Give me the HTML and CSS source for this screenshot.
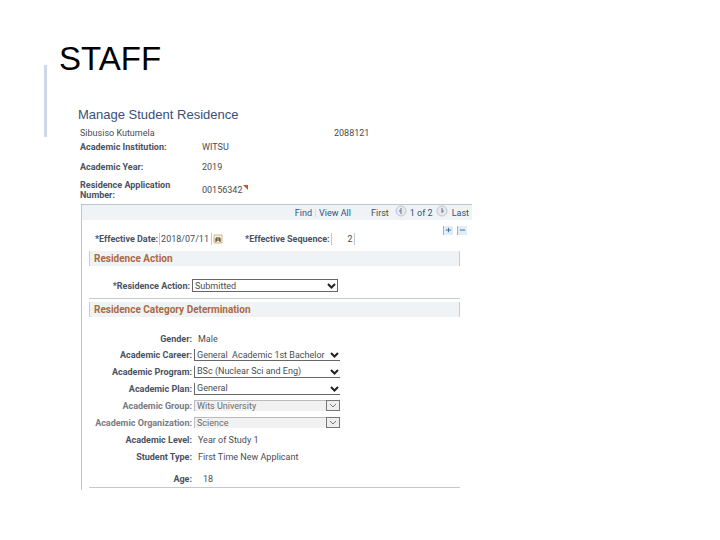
FILE: index.html
```html
<!DOCTYPE html>
<html lang="en">
<head>
<meta charset="utf-8">
<title>Manage Student Residence</title>
<link rel="stylesheet" href="styles.css">
</head>
<body>
<main class="slide">
  <div class="accent"></div>
  <div class="content">
    <h1>STAFF</h1>
    <form class="page">
      <h2>Manage Student Residence</h2>
      <div class="summary">
        <span>Sibusiso Kutumela</span><span></span><span>2088121</span>
        <b>Academic Institution:</b><span>WITSU</span><span></span>
        <b>Academic Year:</b><span>2019</span><span></span>
        <b>Residence Application Number:</b>
        <span class="flagged">00156342<svg class="flag" viewBox="0 0 5 5"><path d="M0 0H5V5L3 3Z"/></svg></span>
      </div>
      <section class="scroll">
        <nav class="pager">
          <a href="#">Find</a><i class="divider"></i><a href="#" class="all">View All</a>
          <span class="first">First</span>
          <button type="button" class="round" aria-label="Previous"><svg viewBox="0 0 12 12"><circle cx="6" cy="6" r="5"/><path d="M6 3V9M6 6H4"/></svg></button>
          <span class="count">1 of 2</span>
          <button type="button" class="round" aria-label="Next"><svg viewBox="0 0 12 12"><circle cx="6" cy="6" r="5"/><path d="M6 3V8M6 6H8"/></svg></button>
          <a href="#">Last</a>
        </nav>
        <div class="effective">
          <label for="date">*Effective Date:</label>
          <input id="date" class="date" value="2018/07/11">
          <button type="button" class="calendar" aria-label="Choose date"><svg viewBox="0 0 10 10"><path class="sheet" d="M1 1H9V9H1Z"/><path class="mark" d="M3 8V4H7V8M3 6H7"/></svg></button>
          <label for="seq" class="seq-label">*Effective Sequence:</label>
          <input id="seq" class="seq" value="2">
          <div class="tools">
            <button type="button" aria-label="Add row"><svg viewBox="0 0 10 9"><path d="M2 4.500H8M5 2V7"/></svg></button>
            <button type="button" aria-label="Delete row"><svg viewBox="0 0 10 9"><path d="M2 4.500H8"/></svg></button>
          </div>
        </div>
        <section class="group">
          <h3>Residence Action</h3>
          <div class="action">
            <label for="action">*Residence Action:</label>
            <span class="pick boxed"><select id="action"><option>Submitted</option></select><svg viewBox="0 0 9 6"><path d="M1 1L4.500 4.500L8 1"/></svg></span>
          </div>
        </section>
        <section class="group">
          <h3>Residence Category Determination</h3>
          <div class="fields">
            <b>Gender:</b><span class="value">Male</span>
            <label for="career">Academic Career:</label>
            <span class="pick"><select id="career"><option>General&nbsp; Academic 1st Bachelor</option></select><svg viewBox="0 0 9 6"><path d="M1 1L4.500 4.500L8 1"/></svg></span>
            <label for="program">Academic Program:</label>
            <span class="pick"><select id="program"><option>BSc (Nuclear Sci and Eng)</option></select><svg viewBox="0 0 9 6"><path d="M1 1L4.500 4.500L8 1"/></svg></span>
            <label for="plan">Academic Plan:</label>
            <span class="pick"><select id="plan"><option>General</option></select><svg viewBox="0 0 9 6"><path d="M1 1L4.500 4.500L8 1"/></svg></span>
            <label for="group" class="dim">Academic Group:</label>
            <span class="pick off"><select id="group" disabled><option>Wits University</option></select><svg viewBox="0 0 12 9"><path d="M3 3L6 6L9 3"/></svg></span>
            <label for="org" class="dim">Academic Organization:</label>
            <span class="pick off"><select id="org" disabled><option>Science</option></select><svg viewBox="0 0 12 9"><path d="M3 3L6 6L9 3"/></svg></span>
            <b>Academic Level:</b><span class="value">Year of Study 1</span>
            <b>Student Type:</b><span class="value">First Time New Applicant</span>
            <b class="last">Age:</b><span class="value age last">18</span>
          </div>
        </section>
      </section>
    </form>
  </div>
</main>
</body>
</html>
```
FILE: styles.css
```css
* { box-sizing: border-box; }
body {
  margin: 0;
  background: #fff;
  color: #4a4c50;
  font: 9px/10px Roboto, "Liberation Sans", sans-serif;
}
h1, h2, h3 { margin: 0; }
svg { display: block; fill: none; }
button { display: block; padding: 0; border: 0; background: none; }
input, select { font: inherit; color: inherit; border-radius: 0; margin: 0; }
a { color: #2f5482; text-decoration: none; }
b, label { font-weight: 700; color: #4a5263; }

.slide { display: grid; grid-template-columns: 3px minmax(0, 1fr); column-gap: 12px; padding: 0 44px; }
.accent { height: 72px; margin-top: 65px; background: #ccd9e8; }
.content { padding-top: 40px; }
h1 { font: 33px/38px "Liberation Sans", sans-serif; color: #000; }
.page { max-width: 413px; padding: 28px 0 0 19px; }
h2 { font: 13px/18px "Liberation Sans", sans-serif; color: #3a5078; }

.summary {
  display: grid;
  grid-template-columns: 122px 132px 1fr;
  grid-template-rows: 13px 15px 26px 20px;
  align-items: center;
  padding: 2px 0 0 2px;
}
.summary b { padding-right: 24px; }
.flagged { display: flex; gap: 1px; }
.flag { width: 5px; height: 5px; fill: #c05a2c; }

.scroll { margin: 4px 0 0 3px; padding-bottom: 2px; border-left: 1px solid #bcc6ce; border-top: 1px solid #bcc6ce; }
.pager { display: flex; align-items: center; justify-content: flex-end; height: 15px; padding-right: 3px; background: #eff3f5; }
.divider { width: 1px; height: 8px; margin: 0 3px; background: #dde2c4; }
.all { margin-right: 20px; }
.first { margin-right: 6px; }
.round { width: 12px; height: 12px; margin-bottom: 3px; }
.round circle { fill: #e6e9ed; stroke: #c3c7ce; }
.round path { stroke: #6c7684; }
.count { margin: 0 3px; color: #2f5482; }
.round + a { margin-left: 4px; }

.effective { display: flex; align-items: center; height: 31px; padding: 6px 5px 0 13px; }
.effective input { height: 12px; padding: 0 1px; border: solid #c4c8cc; border-width: 0 1px; background: none; }
.effective .date { width: 53px; margin-left: 1px; }
.effective .seq { width: 24px; margin-left: 1px; text-align: right; }
.calendar { width: 10px; height: 10px; margin-left: 1px; }
.sheet { fill: #fcf3d8; stroke: #d0b880; }
.mark { stroke: #35302c; }
.seq-label { margin-left: 22px; }
.tools { display: flex; gap: 4px; align-self: flex-start; margin-left: auto; }
.tools button { width: 10px; height: 9px; background: #e2edf5; border-left: 1px solid #9bb6cb; }
.tools path { stroke: #376a95; }

.group { margin: 0 12px 0 7px; border-bottom: 1px solid #c5c9ce; }
.group + .group { margin-top: 3px; }
h3 {
  padding-left: 4px;
  border: solid #c5ccd2;
  border-width: 0 1px;
  background: #eff3f5;
  color: #ae6842;
  font-size: 10px;
  line-height: 15px;
}
.action { display: grid; grid-template-columns: 101px 146px; column-gap: 2px; align-items: center; padding: 13px 0 6px; }
.action label, .fields b, .fields label { text-align: right; }
.fields {
  display: grid;
  grid-template-columns: 103px 146px;
  grid-template-rows: 16px 16px repeat(6, 17px) 22px;
  column-gap: 2px;
  align-items: center;
  padding: 14px 0 0;
}
.value { padding-left: 4px; }
.age { padding-left: 9px; }
.last { padding-top: 6px; }
.fields .dim { color: #777b83; }
.pick { display: grid; align-items: center; }
.pick > * { grid-area: 1 / 1; }
.pick select {
  width: 100%;
  height: 12px;
  padding: 0 2px;
  border: solid #666;
  border-width: 0 0 1px 1px;
  appearance: none;
  background: #fff;
  line-height: 10px;
}
.pick.boxed select { height: 13px; border-width: 1px; }
.pick svg { width: 9px; height: 6px; margin-right: 1px; justify-self: end; stroke: #222; stroke-width: 2px; pointer-events: none; }
.pick.boxed svg { margin-right: 2px; }
.pick.off select { height: 11px; background: #f1f1f1; border: solid #bbb; border-width: 1px 0 0 1px; color: #6c6c6c; opacity: 1; }
.pick.off svg { width: 14px; height: 11px; margin: 0; border: 1px solid #777; background: #eee; stroke: #777; stroke-width: 1px; }
```
